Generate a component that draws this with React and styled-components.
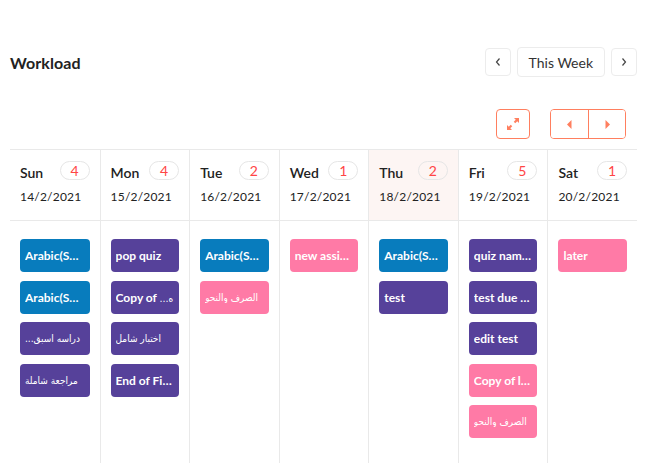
import React from "react";
import styled, { createGlobalStyle } from "styled-components";

const Global = createGlobalStyle`
  html, body { margin: 0; padding: 0; background: #fff; }
  body { font-family: Lato, "DejaVu Sans", "Noto Sans", sans-serif; color: #222; overflow: hidden; }
  * { box-sizing: border-box; }
`;

const CORAL = "#ff7f5f";
const COLORS = { blue: "#087cbd", purple: "#56419a", pink: "#ff7aa6" };
const ARABIC_FONT = `"DejaVu Sans Condensed", "DejaVu Sans", sans-serif`;

const Page = styled.div`
  padding: 47px 15px 0 10px;
  width: 652px;
`;

const TitleBar = styled.div`
  display: flex;
  align-items: center;
  justify-content: space-between;
  height: 30px;
`;

const Title = styled.h2`
  margin: 0;
  font-size: 16px;
  font-weight: 700;
  color: #222;
  letter-spacing: 0.1px;
`;

const WeekNav = styled.div`
  display: flex;
  align-items: center;
  gap: 6px;
`;

const NavButton = styled.button`
  height: ${(p) => (p.$wide ? 30 : 28)}px;
  min-width: ${(p) => (p.$wide ? 88 : 26)}px;
  padding: 0 ${(p) => (p.$wide ? 11 : 0)}px;
  border: 1px solid #ececec;
  border-radius: 4px;
  background: #fff;
  font-family: inherit;
  font-size: 14px;
  color: #333;
  display: flex;
  align-items: center;
  justify-content: center;
  cursor: pointer;
`;

const Toolbar = styled.div`
  display: flex;
  justify-content: flex-end;
  align-items: center;
  gap: 20px;
  margin-top: 32px;
  padding-right: 11px;
  height: 30px;
`;

const OutlineButton = styled.button`
  width: 34px;
  height: 30px;
  border: 1px solid ${CORAL};
  border-radius: 4px;
  background: #fff;
  display: flex;
  align-items: center;
  justify-content: center;
  padding: 0;
`;

const ButtonGroup = styled.div`
  display: flex;
  height: 30px;
  border: 1px solid ${CORAL};
  border-radius: 4px;
  overflow: hidden;
`;

const GroupButton = styled.button`
  width: 37px;
  height: 100%;
  border: none;
  border-left: ${(p) => (p.$divider ? `1px solid ${CORAL}` : "none")};
  background: #fff;
  display: flex;
  align-items: center;
  justify-content: center;
  padding: 0;
`;

const Week = styled.div`
  margin-top: 10px;
  border-top: 1px solid #e9e9e9;
  display: grid;
  grid-template-columns: repeat(7, 1fr);
`;

const Column = styled.div`
  border-left: ${(p) => (p.$first ? "none" : "1px solid #e9e9e9")};
  display: flex;
  flex-direction: column;
  min-width: 0;
`;

const DayHead = styled.div`
  height: 71px;
  padding: 10px 10px 0 10px;
  border-bottom: 1px solid #e9e9e9;
  background: ${(p) => (p.$today ? "#fdf5f3" : "#fff")};
`;

const DayTop = styled.div`
  display: flex;
  justify-content: space-between;
  align-items: center;
  height: 20px;
`;

const DayName = styled.span`
  font-size: 14px;
  font-weight: 600;
  color: #222;
  padding-top: 5px;
`;

const Count = styled.span`
  width: 30px;
  height: 19px;
  border: 1px solid #e6e6e6;
  border-radius: 10px;
  color: #ff4545;
  font-size: 14px;
  display: flex;
  align-items: center;
  justify-content: center;
`;

const DayDate = styled.div`
  margin-top: 9px;
  font-size: 12px;
  line-height: 16px;
  color: #222;
  letter-spacing: 0.2px;
`;

const DayBody = styled.div`
  padding: 18px 10px 0 10px;
  min-height: 260px;
  display: flex;
  flex-direction: column;
  gap: 8.5px;
`;

const Event = styled.div`
  height: 33px;
  border-radius: 4px;
  background: ${(p) => COLORS[p.$color]};
  color: #fff;
  font-size: 12px;
  font-weight: 700;
  padding: 0 5px;
  display: flex;
  align-items: center;
  min-width: 0;
`;

const EventText = styled.span`
  display: block;
  white-space: nowrap;
  overflow: hidden;
  text-overflow: ${(p) => (p.$clip ? "clip" : "ellipsis")};
  width: 100%;
  direction: ${(p) => (p.$rtl ? "rtl" : "ltr")};
  text-align: left;
  ${(p) => p.$ar && `font-family: ${ARABIC_FONT}; font-size: 10px; font-weight: 400;`}
`;

const ArabicRun = styled.span`
  font-family: ${ARABIC_FONT};
  font-size: 10px;
  font-weight: 400;
`;

const Chevron = ({ dir }) => (
  <svg width="8" height="10" viewBox="0 0 8 10">
    <polyline
      points={dir === "left" ? "5.5,1.5 2.5,5 5.5,8.5" : "2.5,1.5 5.5,5 2.5,8.5"}
      fill="none"
      stroke="#444"
      strokeWidth="1.2"
    />
  </svg>
);

const Caret = ({ dir }) => (
  <svg width="7" height="11" viewBox="0 0 7 11">
    <polygon points={dir === "left" ? "5.5,1 1,5.5 5.5,10" : "1.5,1 6,5.5 1.5,10"} fill={CORAL} />
  </svg>
);

const ExpandIcon = () => (
  <svg width="14" height="14" viewBox="0 0 14 14">
    <polygon points="8,1 13,1 13,6" fill={CORAL} />
    <line x1="11.5" y1="2.5" x2="8.5" y2="5.5" stroke={CORAL} strokeWidth="2.2" />
    <polygon points="1,8 1,13 6,13" fill={CORAL} />
    <line x1="2.5" y1="11.5" x2="5.5" y2="8.5" stroke={CORAL} strokeWidth="2.2" />
  </svg>
);

const days = [
  {
    name: "Sun", date: "14/2/2021", count: 4,
    events: [
      { t: "Arabic(Section A) Assignment", c: "blue" },
      { t: "Arabic(Section B) Quiz", c: "blue" },
      { t: "دراسه اسبق...", c: "purple", ar: true, rtl: true },
      { t: "مراجعة شاملة", c: "purple", ar: true },
    ],
  },
  {
    name: "Mon", date: "15/2/2021", count: 4,
    events: [
      { t: "pop quiz", c: "purple" },
      { t: "Copy of ", tail: "…ه", c: "purple", clip: true },
      { t: "اختبار شامل", c: "purple", ar: true },
      { t: "End of First Term Exam", c: "purple" },
    ],
  },
  {
    name: "Tue", date: "16/2/2021", count: 2,
    events: [
      { t: "Arabic(Section A) Homework", c: "blue" },
      { t: "الصرف والنحو", c: "pink", ar: true },
    ],
  },
  {
    name: "Wed", date: "17/2/2021", count: 1,
    events: [{ t: "new assignment", c: "pink" }],
  },
  {
    name: "Thu", date: "18/2/2021", count: 2, today: true,
    events: [
      { t: "Arabic(Section C) Quiz", c: "blue" },
      { t: "test", c: "purple" },
    ],
  },
  {
    name: "Fri", date: "19/2/2021", count: 5,
    events: [
      { t: "quiz name here", c: "purple" },
      { t: "test due date", c: "purple" },
      { t: "edit test", c: "purple" },
      { t: "Copy of later assignment", c: "pink" },
      { t: "الصرف والنحو", c: "pink", ar: true },
    ],
  },
  {
    name: "Sat", date: "20/2/2021", count: 1,
    events: [{ t: "later", c: "pink" }],
  },
];

export default function App() {
  return (
    <>
      <Global />
      <Page>
        <TitleBar>
          <Title>Workload</Title>
          <WeekNav>
            <NavButton aria-label="Previous week"><Chevron dir="left" /></NavButton>
            <NavButton $wide>This Week</NavButton>
            <NavButton aria-label="Next week"><Chevron dir="right" /></NavButton>
          </WeekNav>
        </TitleBar>
        <Toolbar>
          <OutlineButton aria-label="Expand"><ExpandIcon /></OutlineButton>
          <ButtonGroup>
            <GroupButton aria-label="Scroll left"><Caret dir="left" /></GroupButton>
            <GroupButton $divider aria-label="Scroll right"><Caret dir="right" /></GroupButton>
          </ButtonGroup>
        </Toolbar>
        <Week>
          {days.map((d, i) => (
            <Column key={d.name} $first={i === 0}>
              <DayHead $today={d.today}>
                <DayTop>
                  <DayName>{d.name}</DayName>
                  <Count>{d.count}</Count>
                </DayTop>
                <DayDate>{d.date}</DayDate>
              </DayHead>
              <DayBody>
                {d.events.map((e, j) => (
                  <Event key={j} $color={e.c}>
                    <EventText $rtl={e.rtl} $ar={e.ar} $clip={e.ar || e.clip}>
                      {e.t}
                      {e.tail && <ArabicRun>{e.tail}</ArabicRun>}
                    </EventText>
                  </Event>
                ))}
              </DayBody>
            </Column>
          ))}
        </Week>
      </Page>
    </>
  );
}
